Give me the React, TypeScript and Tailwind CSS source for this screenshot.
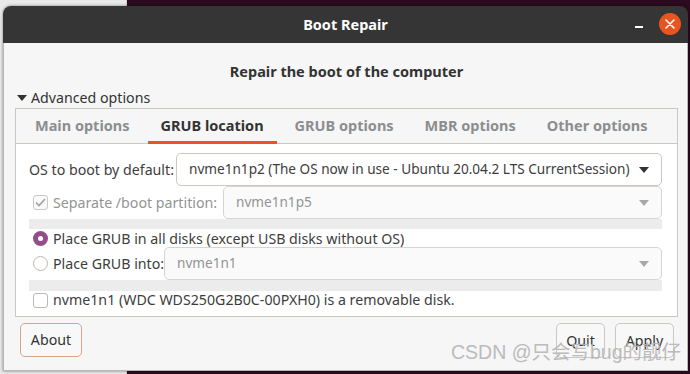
const FONT = { fontFamily: '"Noto Sans", "Open Sans", sans-serif' };

function Caret({ disabled }: { disabled?: boolean }) {
  return (
    <svg width="10" height="6" viewBox="0 0 10 6" className="shrink-0">
      <path d="M0 0 L10 0 L5 6 Z" fill={disabled ? '#a8a8a8' : '#333333'} />
    </svg>
  );
}

function Combo({ text, disabled, className }: { text: string; disabled?: boolean; className?: string }) {
  return (
    <div
      className={`h-[33px] flex items-center gap-[6px] pl-[12px] pr-[12px] rounded-[5px] border text-[13.6px] ${
        disabled ? 'border-[#d8d4d0] bg-[#fafafa] text-[#929595]' : 'border-[#cdc7c2] bg-white text-[#3d3d3d]'
      } ${className ?? ''}`}
    >
      <span className="flex-1 min-w-0 whitespace-nowrap overflow-hidden">{text}</span>
      <Caret disabled={disabled} />
    </div>
  );
}

function Check({ checked, disabled }: { checked?: boolean; disabled?: boolean }) {
  return (
    <div
      className={`w-[15px] h-[15px] rounded-[3px] border flex items-center justify-center shrink-0 ${
        disabled ? 'border-[#c9c9c9] bg-[#fafafa]' : 'border-[#bdb8b3] bg-white'
      }`}
    >
      {checked && (
        <svg width="11" height="9" viewBox="0 0 11 9">
          <path d="M1 4.5 L4 7.5 L10 1" fill="none" stroke={disabled ? '#a0a0a0' : '#333'} strokeWidth="1.6" />
        </svg>
      )}
    </div>
  );
}

function Radio({ checked }: { checked?: boolean }) {
  return checked ? (
    <div className="w-[15px] h-[15px] rounded-full bg-[#924d8b] flex items-center justify-center shrink-0">
      <div className="w-[5px] h-[5px] rounded-full bg-white" />
    </div>
  ) : (
    <div className="w-[15px] h-[15px] rounded-full border border-[#bdb8b3] bg-white shrink-0" />
  );
}

const TABS = ['Main options', 'GRUB location', 'GRUB options', 'MBR options', 'Other options'];

export default function App() {
  return (
    <div className="relative w-[690px] h-[374px] overflow-hidden bg-[#2c0a20] text-[14.2px]" style={FONT}>
      {/* window behind, on the left */}
      <div className="absolute left-0 top-0 w-[127px] h-full bg-[#e9e9e9] border-r border-[#cfcfcf]" />

      {/* main window */}
      <div className="absolute left-[3px] top-[6px] w-[685px] h-[365px] flex flex-col rounded-t-[8px] overflow-hidden shadow-[0_0_3px_rgba(0,0,0,0.5)]">
        {/* title bar */}
        <div className="relative h-[37px] shrink-0 bg-[#353535] flex items-center justify-center">
          <span className="text-white font-bold text-[14.5px]">Boot Repair</span>
          <div className="absolute left-[632px] top-[20px] w-[8px] h-[2px] bg-white" />
          <div className="absolute left-[656px] top-[7px] w-[22px] h-[22px] rounded-full bg-[#e95420] flex items-center justify-center">
            <svg width="10" height="10" viewBox="0 0 10 10">
              <path d="M1 1 L9 9 M9 1 L1 9" stroke="white" strokeWidth="1.6" strokeLinecap="round" />
            </svg>
          </div>
        </div>

        {/* body */}
        <div className="flex-1 bg-[#f6f6f6] border-x border-b border-[#b8b8b8] flex flex-col pl-[11px] pr-[9px]">
          <div className="h-[46px] pt-[18px] text-center font-bold text-[#333] text-[14.5px]">Repair the boot of the computer</div>
          <div className="h-[18px] flex items-center gap-[4px] text-[#333]">
            <svg width="10" height="6" viewBox="0 0 10 6" className="ml-[2px]">
              <path d="M0 0 L10 0 L5 6 Z" fill="#333" />
            </svg>
            <span>Advanced options</span>
          </div>

          {/* notebook */}
          <div className="mt-[1px] h-[209px] border border-[#cdc7c2] flex flex-col">
            <div className="h-[35px] shrink-0 flex border-b border-[#cdc7c2] bg-[#f6f6f6] pl-[6px] text-[14.5px]">
              {TABS.map((t, i) => (
                <div
                  key={t}
                  className={`relative h-full flex items-center font-bold px-[13px] ${
                    i === 1 ? 'text-[#333]' : 'text-[#8b8e8f]'
                  } ${i === 0 ? '' : 'ml-[5px]'}`}
                >
                  {t}
                  {i === 1 && <div className="absolute left-0 right-0 bottom-[-1px] h-[3px] bg-[#e95420]" />}
                </div>
              ))}
            </div>

            <div className="flex-1 bg-white pl-[13px] pr-[15px] pt-[9px] flex flex-col text-[#3d3d3d]">
              <div className="flex items-center">
                <span className="w-[147px] shrink-0 whitespace-nowrap">OS to boot by default:</span>
                <Combo text="nvme1n1p2 (The OS now in use - Ubuntu 20.04.2 LTS CurrentSession)" className="flex-1" />
              </div>
              <div className="flex items-center">
                <div className="w-[194px] shrink-0 flex items-center gap-[5px] pl-[4px] text-[#929595]">
                  <Check checked disabled />
                  <span className="whitespace-nowrap">Separate /boot partition:</span>
                </div>
                <Combo text="nvme1n1p5" disabled className="flex-1" />
              </div>
              <div className="h-[10px] bg-[#ececec]" />
              <div className="h-[18px] flex items-center gap-[5px] pl-[4px] pt-[1px]">
                <Radio checked />
                <span className="whitespace-nowrap">Place GRUB in all disks (except USB disks without OS)</span>
              </div>
              <div className="flex items-center">
                <div className="w-[135px] shrink-0 flex items-center gap-[5px] pl-[4px]">
                  <Radio />
                  <span className="whitespace-nowrap">Place GRUB into:</span>
                </div>
                <Combo text="nvme1n1" disabled className="flex-1" />
              </div>
              <div className="h-[11px] bg-[#ececec]" />
              <div className="h-[18px] flex items-center gap-[5px] pl-[4px]">
                <Check />
                <span className="whitespace-nowrap">nvme1n1 (WDC WDS250G2B0C-00PXH0) is a removable disk.</span>
              </div>
            </div>
          </div>

          {/* buttons */}
          <div className="mt-[6px] flex items-start text-[#333]">
            <button className="ml-[5px] w-[62px] h-[34px] rounded-[5px] border border-[#d9a48d] bg-[#f8f8f8]">About</button>
            <button className="ml-auto w-[49px] h-[35px] rounded-[5px] border border-[#cdc7c2] bg-[#f8f8f8]">Quit</button>
            <button className="ml-[10px] mr-[4px] w-[59px] h-[35px] rounded-[5px] border border-[#cdc7c2] bg-[#f8f8f8]">Apply</button>
          </div>
        </div>
      </div>

      {/* watermark */}
      <div
        className="absolute left-[451px] top-[338px] text-[19.5px] text-[#b5b5b5] whitespace-nowrap opacity-90"
        style={{ fontFamily: '"Liberation Sans", "Noto Sans CJK SC", sans-serif' }}
      >
        CSDN @只会写bug的靓仔
      </div>
    </div>
  );
}
